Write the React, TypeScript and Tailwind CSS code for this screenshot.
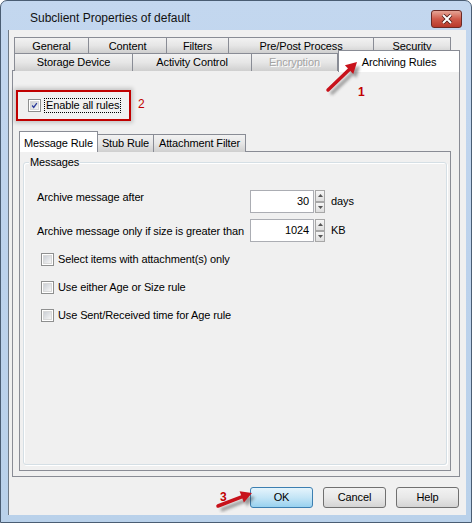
import React from 'react';

// Windows 7 style dialog: "Subclient Properties of default"

const font = { fontFamily: '"Liberation Sans", Arial, sans-serif' };

const row1Tabs = [
  { label: 'General', w: 'w-[75px]' },
  { label: 'Content', w: 'w-[79px]' },
  { label: 'Filters', w: 'w-[63px]' },
  { label: 'Pre/Post Process', w: 'w-[146px]' },
  { label: 'Security', w: 'w-[78px]' },
];

function CheckBox({ checked = false }: { checked?: boolean }) {
  return (
    <div className="w-[13px] h-[13px] border border-[#8e8f8f] bg-white p-[1px] shrink-0">
      <div className="w-full h-full bg-linear-to-br from-[#cbcfd5] to-[#f6f6f6] border border-[#d8d8d8] flex items-center justify-center">
        {checked && (
          <svg width="9" height="9" viewBox="0 0 9 9">
            <path d="M1.5 4.5 L3.5 7 L7.5 1.5" stroke="#2a3a9a" strokeWidth="1.6" fill="none" />
          </svg>
        )}
      </div>
    </div>
  );
}

function Spinner({ value }: { value: string }) {
  return (
    <div className="flex h-[23px]">
      <div className="w-[64px] h-full border border-[#abadb3] bg-white text-[11px] text-black flex items-center justify-end pr-[4px]">
        {value}
      </div>
      <div className="ml-[1px] w-[10px] h-full flex flex-col">
        {[0, 1].map((i) => (
          <div
            key={i}
            className="flex-1 border border-[#a7a7a7] bg-linear-to-b from-[#f6f6f6] to-[#dedede] flex items-center justify-center"
          >
            <svg width="5" height="3" viewBox="0 0 5 3">
              <path d={i === 0 ? 'M0 3 L2.5 0 L5 3 Z' : 'M0 0 L2.5 3 L5 0 Z'} fill="#555" />
            </svg>
          </div>
        ))}
      </div>
    </div>
  );
}

function Button({ label, focused = false }: { label: string; focused?: boolean }) {
  return (
    <div
      className={
        focused
          ? 'w-[63px] h-[21px] rounded-[3px] border border-[#3c7fb1] bg-linear-to-b from-[#e5f4fc] via-[#c4e5f6] to-[#98d1ef] flex items-center justify-center text-[11px] text-black'
          : 'w-[63px] h-[21px] rounded-[3px] border border-[#707070] bg-linear-to-b from-[#f2f2f2] via-[#e8e8e8] to-[#d4d4d4] flex items-center justify-center text-[11px] text-black'
      }
    >
      {label}
    </div>
  );
}

function Arrow({ x1, y1, x2, y2 }: { x1: number; y1: number; x2: number; y2: number }) {
  const dx = x2 - x1;
  const dy = y2 - y1;
  const len = Math.sqrt(dx * dx + dy * dy);
  const ux = dx / len;
  const uy = dy / len;
  const px = -uy;
  const py = ux;
  const hb = 11; // head length
  const hw = 6; // head half width
  const bx = x2 - ux * hb;
  const by = y2 - uy * hb;
  const head = `${x2},${y2} ${bx + px * hw},${by + py * hw} ${bx - px * hw},${by - py * hw}`;
  return (
    <g>
      <g transform="translate(3,4)" opacity="0.45" filter="url(#blur)">
        <line x1={x1} y1={y1} x2={bx} y2={by} stroke="#333" strokeWidth="3.5" />
        <polygon points={head} fill="#333" />
      </g>
      <line x1={x1} y1={y1} x2={bx} y2={by} stroke="#c8121b" strokeWidth="3.5" strokeLinecap="round" />
      <polygon points={head} fill="#c8121b" />
    </g>
  );
}

export default function App() {
  return (
    <div
      style={font}
      className="relative w-[472px] h-[523px] overflow-hidden rounded-t-[7px] border border-[#4a5d73] bg-linear-to-b from-[#c3d7ef] via-[#bcd2ec] to-[#b9d1ea] text-black tracking-[-0.12px]"
    >
      {/* title bar */}
      <div className="h-[29px] flex items-start pt-[9px]">
        <div className="ml-[29px] text-[12px] leading-[16px] text-[#111] tracking-normal">Subclient Properties of default</div>
        <div className="ml-auto mr-[9px] w-[31px] h-[18px] rounded-[3px] border border-[#6b2a25] bg-linear-to-b from-[#e5a597] via-[#cf5a4a] to-[#b8382a] flex items-center justify-center">
          <svg width="12" height="10" viewBox="0 0 12 10">
            <path d="M2 1 L10 9 M10 1 L2 9" stroke="#4a1a16" strokeWidth="3.6" />
            <path d="M2 1 L10 9 M10 1 L2 9" stroke="#ffffff" strokeWidth="2" />
          </svg>
        </div>
      </div>

      {/* client area */}
      <div className="ml-[7px] mr-[5px] h-[485px] bg-[#f0f0f0] border-l border-[#6f7a86] pt-[7px]">
        {/* tabs row 1 */}
        <div className="flex pl-[5px] h-[16px]">
          {row1Tabs.map((t) => (
            <div
              key={t.label}
              className={`${t.w} h-full border border-b-0 border-[#898c95] -ml-px first:ml-0 bg-linear-to-b from-[#f2f2f2] via-[#e6e6e6] to-[#cfcfcf] flex items-end justify-center text-[11px] leading-[14px]`}
            >
              {t.label}
            </div>
          ))}
        </div>
        {/* tabs row 2 */}
        <div className="flex pl-[5px] h-[18px]">
          <div className="w-[119px] h-full border border-b-0 border-[#898c95] bg-linear-to-b from-[#f2f2f2] via-[#e6e6e6] to-[#cfcfcf] flex items-center justify-center text-[11px]">
            Storage Device
          </div>
          <div className="w-[119px] h-full border border-b-0 border-l-0 border-[#898c95] bg-linear-to-b from-[#f2f2f2] via-[#e6e6e6] to-[#cfcfcf] flex items-center justify-center text-[11px]">
            Activity Control
          </div>
          <div className="w-[86px] h-full border border-b-0 border-l-0 border-[#898c95] bg-linear-to-b from-[#f2f2f2] via-[#e6e6e6] to-[#cfcfcf] flex items-center justify-center text-[11px] text-[#a3a3a3] [text-shadow:1px_1px_0_#ffffff]">
            Encryption
          </div>
          <div className="relative z-10 -mt-[3px] w-[122px] h-[22px] border border-b-0 border-[#898c95] bg-white flex items-start justify-center pt-[3px] text-[11px]">
            Archiving Rules
          </div>
        </div>

        {/* main tab panel */}
        <div className="ml-[3px] w-[448px] h-[407px] border border-[#898c95] bg-[#f0f0f0] -mt-px">
          <div className="flex items-center mt-[19px]">
            <div className="ml-[3px] w-[115px] h-[31px] border-2 border-[#c00000] shadow-[0_0_4px_2px_rgba(0,0,0,0.18)] flex items-center pl-[10px] gap-[4px]">
              <CheckBox checked />
              <span className="text-[11px] leading-[13px] outline-1 outline-dotted outline-black px-[1px]">Enable all rules</span>
            </div>
            <span className="ml-[7px] -mt-[4px] text-[12px] text-[#c00000]">2</span>
          </div>

          {/* inner tabs */}
          <div className="flex ml-[6px] mt-[10px] h-[21px] items-end">
            <div className="relative z-10 w-[79px] h-[21px] border border-b-0 border-[#898c95] bg-white flex items-start pt-[3px] justify-center text-[11px]">
              Message Rule
            </div>
            <div className="w-[56px] h-[18px] border border-b-0 border-l-0 border-[#898c95] bg-linear-to-b from-[#f2f2f2] via-[#e6e6e6] to-[#cfcfcf] flex items-center justify-center text-[11px]">
              Stub Rule
            </div>
            <div className="w-[92px] h-[18px] border border-b-0 border-l-0 border-[#898c95] bg-linear-to-b from-[#f2f2f2] via-[#e6e6e6] to-[#cfcfcf] flex items-center justify-center text-[11px]">
              Attachment Filter
            </div>
          </div>

          {/* inner panel */}
          <div className="ml-[6px] w-[432px] h-[320px] -mt-px border border-[#898c95] bg-[#f0f0f0] pt-[10px] pl-[3px]">
            <div className="relative w-[424px] h-[303px] rounded-[3px] border border-[#d5dfe5] shadow-[inset_1px_1px_0_#ffffff,1px_1px_0_#ffffff]">
              <span className="absolute -top-[8px] left-[5px] px-[1px] bg-[#f0f0f0] text-[11px] leading-[14px]">Messages</span>

              <div className="flex items-start mt-[27px] pl-[13px]">
                <div className="w-[213px] text-[11px] leading-[14px]">Archive message after</div>
                <Spinner value="30" />
                <div className="ml-[6px] text-[11px] leading-[23px]">days</div>
              </div>

              <div className="flex items-center mt-[6px] pl-[13px]">
                <div className="w-[213px] text-[11px] leading-[14px]">Archive message only if size is greater than</div>
                <Spinner value="1024" />
                <div className="ml-[6px] text-[11px] leading-[23px]">KB</div>
              </div>

              <div className="flex flex-col gap-[14px] mt-[10px] pl-[17px]">
                {['Select items with attachment(s) only', 'Use either Age or Size rule', 'Use Sent/Received time for Age rule'].map((t) => (
                  <div key={t} className="flex items-center gap-[4px] h-[14px]">
                    <CheckBox />
                    <span className="text-[11px] leading-[14px]">{t}</span>
                  </div>
                ))}
              </div>
            </div>
          </div>
        </div>

        {/* dialog buttons */}
        <div className="flex justify-end gap-[10px] pr-[7px] mt-[10px]">
          <Button label="OK" focused />
          <Button label="Cancel" />
          <Button label="Help" />
        </div>
      </div>

      {/* annotations */}
      <svg className="absolute left-0 top-0 z-20 pointer-events-none" width="472" height="523">
        <defs>
          <filter id="blur" x="-20%" y="-20%" width="140%" height="140%">
            <feGaussianBlur stdDeviation="1.6" />
          </filter>
        </defs>
        <Arrow x1={327} y1={89} x2={356} y2={61} />
        <Arrow x1={217} y1={505} x2={251} y2={492} />
      </svg>
      <span className="absolute z-20 left-[357px] top-[82px] text-[12px] font-bold text-[#c00000]">1</span>
      <span className="absolute z-20 left-[219px] top-[487px] text-[12px] font-bold text-[#c00000]">3</span>
    </div>
  );
}
